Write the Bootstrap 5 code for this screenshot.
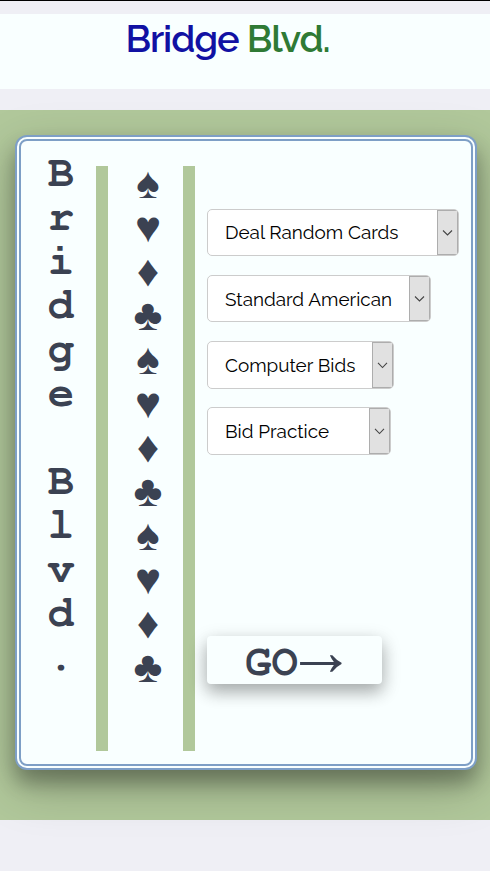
<!DOCTYPE html>
<html lang="en">
<head>
<meta charset="utf-8">
<meta name="viewport" content="width=device-width, initial-scale=1">
<title>Bridge Blvd.</title>
<link href="https://cdn.jsdelivr.net/npm/bootstrap@5.3.0/dist/css/bootstrap.min.css" rel="stylesheet">
<style>
  body { background: #efeff5; font-family: Raleway, Lato, sans-serif; min-height: 871px; border-top: 1px solid #000; overflow: hidden; }
  .site-head { margin-top: 13px; height: 75px; background: #f9ffff; padding-right: 35px; }
  .site-title { font-size: 38px; line-height: 50px; font-weight: 600; letter-spacing: -1.15px; color: #1111a3; }
  .site-title span { color: #2f7a35; }
  .felt { margin-top: 21px; height: 710px; background: #b1c89b; padding: 25px 13px 0 15px; }
  .board { height: 635px; border: 6px double #7e9fc6; border-radius: 12px; background: #f9ffff; padding: 10px 12px 13px 0;
    box-shadow: 0 13px 20px 0 rgba(0,0,0,.3), 0 17px 50px 0 rgba(0,0,0,.22); }
  .strip { width: 75px; padding-left: 5px; color: #3b4252; text-align: center; }
  .strip-name { font: bold 44px/44px FreeMono, "Courier New", monospace; }
  .strip-name span { display: block; height: 44px; }
  .strip-suits { font: 44px/44px "Liberation Serif", serif; padding-top: 11px; }
  .rail { width: 12px; margin-top: 15px; background: #b1c89b; }
  .options { margin-left: 12px; padding-top: 58px; gap: 19px; }
  .options .form-select { height: 47px; font-size: 18.9px; color: #000; background-color: #fff; border: 1px solid #ccc; border-radius: 5px; padding: 2px 0 0 17px;
    background-position: right 0 top 0; background-size: 21px 100%;
    background-image: url("data:image/svg+xml,%3Csvg xmlns='http://www.w3.org/2000/svg' viewBox='0 0 21 45' preserveAspectRatio='none'%3E%3Crect x='.5' y='.5' width='20' height='44' fill='%23e1e1e1' stroke='%23adadad'/%3E%3Cpath d='M6 20.500l4.500 4.500 4.500-4.500' fill='none' stroke='%23444' stroke-width='1.100'/%3E%3C/svg%3E"); }
  .options #deal { width: 252px; padding-top: 0; }
  .options #system { width: 224px; }
  .options #bids { width: 187px; height: 48px; margin-bottom: -1px; padding-top: 0; }
  .options #mode { width: 184px; height: 48px; margin-bottom: -1px; padding-top: 0; }
  .go { width: 175px; height: 48px; margin-top: 163px; padding: 0 2px 0 0; border: 0; border-radius: 4px; background: #f9ffff; color: #3b4252; font: bold 44px/44px FreeMono, "Courier New", monospace;
    box-shadow: 0 8px 16px 0 rgba(0,0,0,.2), 0 6px 20px 0 rgba(0,0,0,.19); }
  .go span { display: inline-block; font: 70px/30px "Liberation Serif", serif; margin: 0 -14px 0 -12px; vertical-align: 0; }
</style>
</head>
<body>
<header class="site-head text-center"><h1 class="site-title m-0">Bridge <span>Blvd.</span></h1></header>
<main class="felt">
  <section class="board d-flex">
    <div class="strip strip-name"><span>B</span><span>r</span><span>i</span><span>d</span><span>g</span><span>e</span><span></span><span>B</span><span>l</span><span>v</span><span>d</span><span>.</span></div>
    <div class="rail"></div>
    <div class="strip strip-suits">♠<br>♥<br>♦<br>♣<br>♠<br>♥<br>♦<br>♣<br>♠<br>♥<br>♦<br>♣</div>
    <div class="rail"></div>
    <form class="options d-flex flex-column align-items-start">
      <select class="form-select" id="deal" aria-label="Deal"><option>Deal Random Cards</option></select>
      <select class="form-select" id="system" aria-label="System"><option>Standard American</option></select>
      <select class="form-select" id="bids" aria-label="Bids"><option>Computer Bids</option></select>
      <select class="form-select" id="mode" aria-label="Mode"><option>Bid Practice</option></select>
      <button class="btn go" type="button">GO<span>→</span></button>
    </form>
  </section>
</main>
<script src="https://cdn.jsdelivr.net/npm/bootstrap@5.3.0/dist/js/bootstrap.bundle.min.js"></script>
</body>
</html>
